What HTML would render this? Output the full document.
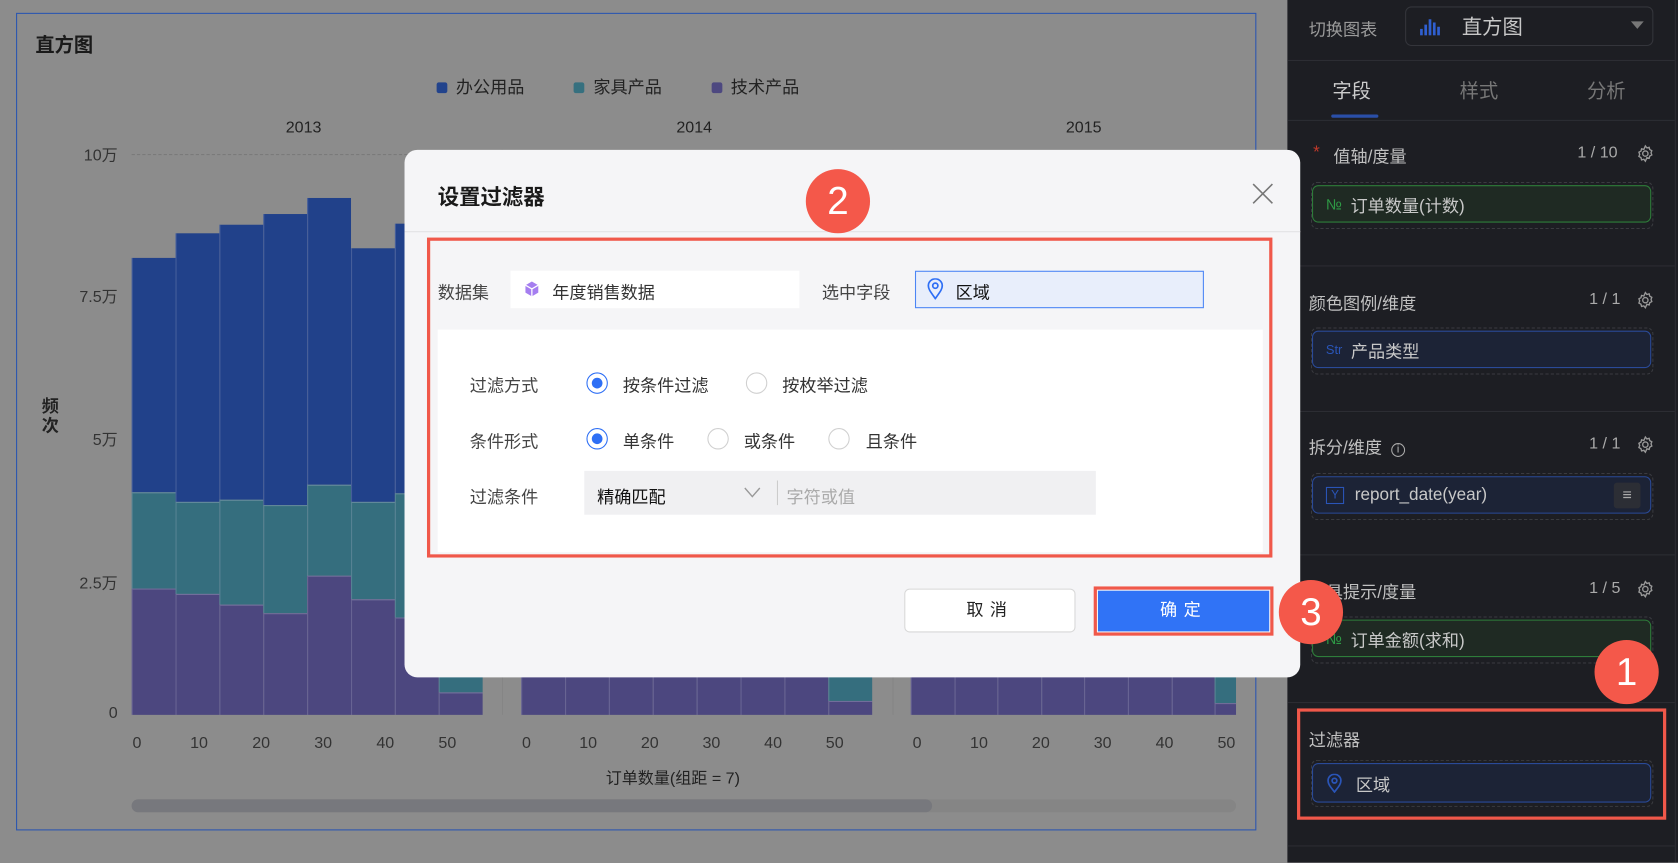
<!DOCTYPE html>
<html><head><meta charset="utf-8"><style>
*{box-sizing:border-box;margin:0;padding:0}
body{width:1678px;height:862px;overflow:hidden;background:#8c8c8c;font-family:"Liberation Sans","Noto Sans CJK SC",sans-serif}
#w{position:absolute;left:0;top:0;width:1568px;height:806px;transform:scale(1.07015);transform-origin:0 0}
.a{position:absolute;white-space:nowrap}
.bar{position:absolute;border-left:1px solid rgba(200,200,220,.22)}
.lbl{position:absolute;font-size:15px;color:#333;transform:translateX(-50%);white-space:nowrap}
.yl{position:absolute;font-size:15px;color:#333;white-space:nowrap;width:60px;text-align:right}
.rp .t{position:absolute;font-size:16px;color:#c0c0c0;white-space:nowrap}
.rp .n{position:absolute;font-size:15px;color:#aaa;white-space:nowrap}
.dash{position:absolute;left:1225px;width:320px;border:1px dashed #3a3b40;border-radius:6px}
.pill{position:absolute;left:1226px;width:317px;border-radius:6px;font-size:16px;color:#c8c8c8;padding-left:12px;display:flex;align-items:center}
.pg{border:1px solid #2e7d3a;background:#1f2a23}
.pb{border:1px solid #2a4a98;background:#1c2336}
.div{position:absolute;left:1203px;width:362px;height:1px;background:#2c2d33}
.radio{position:absolute;width:20px;height:20px;border-radius:50%;border:1px solid #d0d0d0;background:#fff}
.radio.on{border:1px solid #2e6ff5}
.radio.on::after{content:"";position:absolute;left:4px;top:4px;width:10px;height:10px;border-radius:50%;background:#2e6ff5}
.dl{position:absolute;font-size:16px;color:#333;white-space:nowrap}
.badge{position:absolute;width:60px;height:60px;border-radius:50%;background:#f4584a;color:#fff;font-size:36px;text-align:center;line-height:60px;font-family:"Liberation Sans",sans-serif}
.gear{position:absolute}
</style></head><body><div id="w">

<div class="a" style="left:15px;top:12px;width:1159px;height:764px;border:1px solid #2a55b0"></div>
<div class="a" style="left:33px;top:28px;font-size:18px;font-weight:bold;color:#1a1a1a">直方图</div>
<div class="a" style="left:408px;top:68px;font-size:16px;color:#222">
<span style="display:inline-block;width:10px;height:10px;border-radius:2px;background:#22438c;margin-right:8px"></span>办公用品
<span style="display:inline-block;width:10px;height:10px;border-radius:2px;background:#36707f;margin:0 8px 0 42px"></span>家具产品
<span style="display:inline-block;width:10px;height:10px;border-radius:2px;background:#4d4880;margin:0 8px 0 42px"></span>技术产品</div>
<div class="a" style="left:267px;top:111px;font-size:15px;color:#222">2013</div>
<div class="a" style="left:632px;top:111px;font-size:15px;color:#222">2014</div>
<div class="a" style="left:996px;top:111px;font-size:15px;color:#222">2015</div>
<div class="a" style="left:123px;top:144px;width:1032px;border-top:1px dashed #777"></div>
<div class="yl" style="top:134px;left:50px">10万</div>
<div class="yl" style="top:266px;left:50px">7.5万</div>
<div class="yl" style="top:400px;left:50px">5万</div>
<div class="yl" style="top:534px;left:50px">2.5万</div>
<div class="yl" style="top:658px;left:50px">0</div>
<div class="a" style="left:39px;top:372px;font-size:16px;font-weight:bold;color:#222;width:18px;white-space:normal;line-height:18px">频次</div>
<div class="a" style="left:469px;top:140px;width:1px;height:528px;background:#858585"></div>
<div class="a" style="left:834px;top:140px;width:1px;height:528px;background:#858585"></div>
<div id="bars"></div>
<div id="xl"></div>
<div class="a" style="left:566px;top:716px;font-size:15px;color:#222">订单数量(组距 = 7)</div>
<div class="a" style="left:123px;top:747px;width:1032px;height:12px;border-radius:6px;background:#858585"></div>
<div class="a" style="left:123px;top:747px;width:748px;height:12px;border-radius:6px;background:#77787d"></div>

<div class="rp">
<div class="a" style="left:1203px;top:0;width:365px;height:806px;background:#1d1e23"></div>
<div class="a" style="left:1565px;top:0;width:1px;height:806px;background:#2c2d33"></div>
<div class="t" style="left:1223px;top:14px;color:#9a9a9a">切换图表</div>
<div class="a" style="left:1313px;top:6px;width:232px;height:37px;border:1px solid #34353b;border-radius:6px"></div>
<svg class="a" style="left:1326px;top:15px" width="22" height="20"><g fill="#2f5fd0"><rect x="1" y="12" width="2.5" height="6"/><rect x="5" y="8" width="2.5" height="10"/><rect x="9" y="3" width="2.5" height="15"/><rect x="13" y="6" width="2.5" height="12"/><rect x="17" y="10" width="2.5" height="8"/></g></svg>
<div class="a" style="left:1366px;top:11px;font-size:19px;color:#c8c8c8">直方图</div>
<div class="a" style="left:1524px;top:20px;border-left:6px solid transparent;border-right:6px solid transparent;border-top:7px solid #777"></div>
<div class="div" style="top:56px"></div>
<div class="t" style="left:1245px;top:71px;font-size:18px;color:#ccc">字段</div>
<div class="t" style="left:1364px;top:71px;font-size:18px;color:#777">样式</div>
<div class="t" style="left:1483px;top:71px;font-size:18px;color:#777">分析</div>
<div class="a" style="left:1244px;top:107px;width:44px;height:3px;background:#2a4fa8;border-radius:2px"></div>
<div class="div" style="top:112px"></div>

<div class="a" style="left:1227px;top:134px;color:#c0392b;font-size:16px">*</div>
<div class="t" style="left:1246px;top:133px">值轴/度量</div>
<div class="n" style="left:1474px;top:134px">1 / 10</div>
<svg class="gear" style="left:1529px;top:135px" width="17" height="17" viewBox="0 0 24 24"><path d="M12 2l2 2.5 3-.8.8 3 2.7 1.5-1 2.8 1 2.8-2.7 1.5-.8 3-3-.8L12 22l-2-2.5-3 .8-.8-3L3.5 15.8l1-2.8-1-2.8 2.7-1.5.8-3 3 .8z" fill="none" stroke="#999" stroke-width="1.8"/><circle cx="12" cy="12" r="3.5" fill="none" stroke="#999" stroke-width="1.8"/></svg>
<div class="dash" style="top:170px;height:44px"></div>
<div class="pill pg" style="top:173px;height:35px"><span style="color:#2e9a45;font-size:14px;margin-right:8px">№</span>订单数量(计数)</div>
<div class="div" style="top:248px"></div>

<div class="t" style="left:1223px;top:270px">颜色图例/维度</div>
<div class="n" style="left:1485px;top:271px">1 / 1</div>
<svg class="gear" style="left:1529px;top:272px" width="17" height="17" viewBox="0 0 24 24"><path d="M12 2l2 2.5 3-.8.8 3 2.7 1.5-1 2.8 1 2.8-2.7 1.5-.8 3-3-.8L12 22l-2-2.5-3 .8-.8-3L3.5 15.8l1-2.8-1-2.8 2.7-1.5.8-3 3 .8z" fill="none" stroke="#999" stroke-width="1.8"/><circle cx="12" cy="12" r="3.5" fill="none" stroke="#999" stroke-width="1.8"/></svg>
<div class="dash" style="top:306px;height:44px"></div>
<div class="pill pb" style="top:309px;height:35px"><span style="color:#2a55b8;font-size:12px;margin-right:8px">Str</span>产品类型</div>
<div class="div" style="top:384px"></div>

<div class="t" style="left:1223px;top:405px">拆分/维度 <span style="display:inline-block;width:13px;height:13px;border:1px solid #aaa;border-radius:50%;font-size:10px;line-height:11px;text-align:center;vertical-align:1px;margin-left:4px">i</span></div>
<div class="n" style="left:1485px;top:406px">1 / 1</div>
<svg class="gear" style="left:1529px;top:407px" width="17" height="17" viewBox="0 0 24 24"><path d="M12 2l2 2.5 3-.8.8 3 2.7 1.5-1 2.8 1 2.8-2.7 1.5-.8 3-3-.8L12 22l-2-2.5-3 .8-.8-3L3.5 15.8l1-2.8-1-2.8 2.7-1.5.8-3 3 .8z" fill="none" stroke="#999" stroke-width="1.8"/><circle cx="12" cy="12" r="3.5" fill="none" stroke="#999" stroke-width="1.8"/></svg>
<div class="dash" style="top:442px;height:44px"></div>
<div class="pill pb" style="top:445px;height:35px"><span style="display:inline-block;width:17px;height:16px;border:1.5px solid #2a55b8;color:#2a55b8;font-size:11px;text-align:center;line-height:14px;margin-right:10px">Y</span>report_date(year)
<span style="position:absolute;left:281px;top:5px;width:25px;height:24px;background:#2c2e35;border-radius:3px;color:#aaa;font-size:15px;text-align:center;line-height:24px">≡</span></div>
<div class="div" style="top:518px"></div>

<div class="t" style="left:1223px;top:540px">工具提示/度量</div>
<div class="n" style="left:1485px;top:541px">1 / 5</div>
<svg class="gear" style="left:1529px;top:542px" width="17" height="17" viewBox="0 0 24 24"><path d="M12 2l2 2.5 3-.8.8 3 2.7 1.5-1 2.8 1 2.8-2.7 1.5-.8 3-3-.8L12 22l-2-2.5-3 .8-.8-3L3.5 15.8l1-2.8-1-2.8 2.7-1.5.8-3 3 .8z" fill="none" stroke="#999" stroke-width="1.8"/><circle cx="12" cy="12" r="3.5" fill="none" stroke="#999" stroke-width="1.8"/></svg>
<div class="dash" style="top:576px;height:44px"></div>
<div class="pill pg" style="top:579px;height:35px"><span style="color:#2e9a45;font-size:14px;margin-right:8px">№</span>订单金额(求和)</div>
<div class="div" style="top:656px"></div>

<div class="a" style="left:1212px;top:662px;width:345px;height:104px;border:3px solid #f0584a"></div>
<div class="t" style="left:1223px;top:678px">过滤器</div>
<div class="dash" style="top:710px;height:44px"></div>
<div class="pill pb" style="top:713px;height:37px">
<svg width="16" height="18" style="margin-right:12px"><path d="M8 17C3 11 2 9 2 6.5a6 6 0 0112 0C14 9 13 11 8 17z" fill="none" stroke="#2a55b8" stroke-width="1.6"/><circle cx="8" cy="6.5" r="2.2" fill="none" stroke="#2a55b8" stroke-width="1.6"/></svg>区域</div>
<div class="div" style="top:790px"></div>
</div>

<div class="a" style="left:378px;top:140px;width:837px;height:493px;background:#f5f5f7;border-radius:12px"></div>
<div class="a" style="left:409px;top:168px;font-size:20px;font-weight:bold;color:#1a1a1a">设置过滤器</div>
<svg class="a" style="left:1170px;top:171px" width="20" height="20"><path d="M1 1L19 19M19 1L1 19" stroke="#777" stroke-width="1.5"/></svg>
<div class="a" style="left:378px;top:216px;width:837px;height:1px;background:#e2e2e4"></div>
<div class="a" style="left:409px;top:308px;width:771px;height:208px;background:#fff"></div>
<div class="a" style="left:399px;top:222px;width:790px;height:299px;border:3px solid #f0584a"></div>
<div class="badge" style="left:753px;top:158px">2</div>

<div class="dl" style="left:409px;top:260px;color:#444">数据集</div>
<div class="a" style="left:477px;top:253px;width:270px;height:35px;background:#fff"></div>
<svg class="a" style="left:489px;top:262px" width="16" height="16"><path d="M8 1L14 4.5V11.5L8 15L2 11.5V4.5Z" fill="#a57ef0"/><path d="M2 4.5L8 8L14 4.5M8 8V15" stroke="#fff" stroke-width="1.2" fill="none"/></svg>
<div class="dl" style="left:516px;top:260px">年度销售数据</div>
<div class="dl" style="left:768px;top:260px;color:#444">选中字段</div>
<div class="a" style="left:855px;top:253px;width:270px;height:35px;background:#e8eefb;border:1px solid #4b85f5"></div>
<svg class="a" style="left:866px;top:260px" width="16" height="20"><path d="M8 19C3 12 1.5 10 1.5 7a6.5 6.5 0 0113 0C14.5 10 13 12 8 19z" fill="none" stroke="#2e6ff5" stroke-width="1.6"/><circle cx="8" cy="7" r="2.4" fill="none" stroke="#2e6ff5" stroke-width="1.6"/></svg>
<div class="dl" style="left:893px;top:260px;color:#111">区域</div>

<div class="dl" style="left:439px;top:347px;color:#444">过滤方式</div>
<div class="radio on" style="left:548px;top:348px"></div>
<div class="dl" style="left:582px;top:347px">按条件过滤</div>
<div class="radio" style="left:697px;top:348px"></div>
<div class="dl" style="left:731px;top:347px">按枚举过滤</div>

<div class="dl" style="left:439px;top:399px;color:#444">条件形式</div>
<div class="radio on" style="left:548px;top:400px"></div>
<div class="dl" style="left:582px;top:399px">单条件</div>
<div class="radio" style="left:661px;top:400px"></div>
<div class="dl" style="left:695px;top:399px">或条件</div>
<div class="radio" style="left:774px;top:400px"></div>
<div class="dl" style="left:809px;top:399px">且条件</div>

<div class="dl" style="left:439px;top:451px;color:#444">过滤条件</div>
<div class="a" style="left:546px;top:440px;width:478px;height:41px;background:#f0f0f2"></div>
<div class="dl" style="left:558px;top:451px;color:#111">精确匹配</div>
<svg class="a" style="left:695px;top:454px" width="16" height="12"><path d="M1 2L8 10L15 2" stroke="#999" stroke-width="1.3" fill="none"/></svg>
<div class="a" style="left:726px;top:449px;width:1px;height:23px;background:#ccc"></div>
<div class="dl" style="left:735px;top:451px;color:#aaa">字符或值</div>

<div class="a" style="left:845px;top:550px;width:160px;height:41px;background:#fff;border:1px solid #d8d8d8;border-radius:5px;font-size:16px;color:#222;text-align:center;line-height:39px;letter-spacing:6px">取消</div>
<div class="a" style="left:1022px;top:548px;width:168px;height:46px;border:3px solid #f0584a"></div>
<div class="a" style="left:1026px;top:552px;width:160px;height:38px;background:#3073f6;font-size:16px;color:#fff;text-align:center;line-height:38px;letter-spacing:6px">确定</div>
<div class="badge" style="left:1195px;top:542px">3</div>
<div class="badge" style="left:1490px;top:598px">1</div>

</div>
<script>
var B=document.getElementById('bars'),h='';
function bar(x,w,b,t,p){
 h+='<div class="bar" style="left:'+x+'px;width:'+w+'px;top:'+b+'px;height:'+(t-b)+'px;background:#21418a"></div>';
 h+='<div class="bar" style="left:'+x+'px;width:'+w+'px;top:'+t+'px;height:'+(p-t)+'px;background:#356e7e;border-top:1px solid rgba(200,200,220,.3)"></div>';
 h+='<div class="bar" style="left:'+x+'px;width:'+w+'px;top:'+p+'px;height:'+(668-p)+'px;background:#4c477f;border-top:1px solid rgba(200,200,220,.3)"></div>';
}
var p1=[[241,460,550],[218,469,555],[210,467,565],[200,472,573],[185,453,538],[232,469,560],[209,461,577],[300,630,647]];
p1.forEach(function(d,i){bar(123+i*41,41,d[0],d[1],d[2])});
var p2=[[240,460,550],[230,465,560],[220,470,555],[235,462,552],[225,470,565],[240,460,548],[230,466,560],[300,600,655]];
p2.forEach(function(d,i){bar(487+i*41,41,d[0],d[1],d[2])});
p2.forEach(function(d,i){var x=851+i*40.6,w=Math.min(40.6,1155-x);var e=(i==7)?[300,600,657]:d;bar(x,w,e[0],e[1],e[2])});
B.innerHTML=h;
var X=document.getElementById('xl'),s='',L=['0','10','20','30','40','50'];
[[128,58],[492,57.6],[857,57.8]].forEach(function(p){L.forEach(function(l,i){s+='<div class="lbl" style="left:'+(p[0]+i*p[1])+'px;top:686px">'+l+'</div>'})});
X.innerHTML=s;
</script>
</body></html>
